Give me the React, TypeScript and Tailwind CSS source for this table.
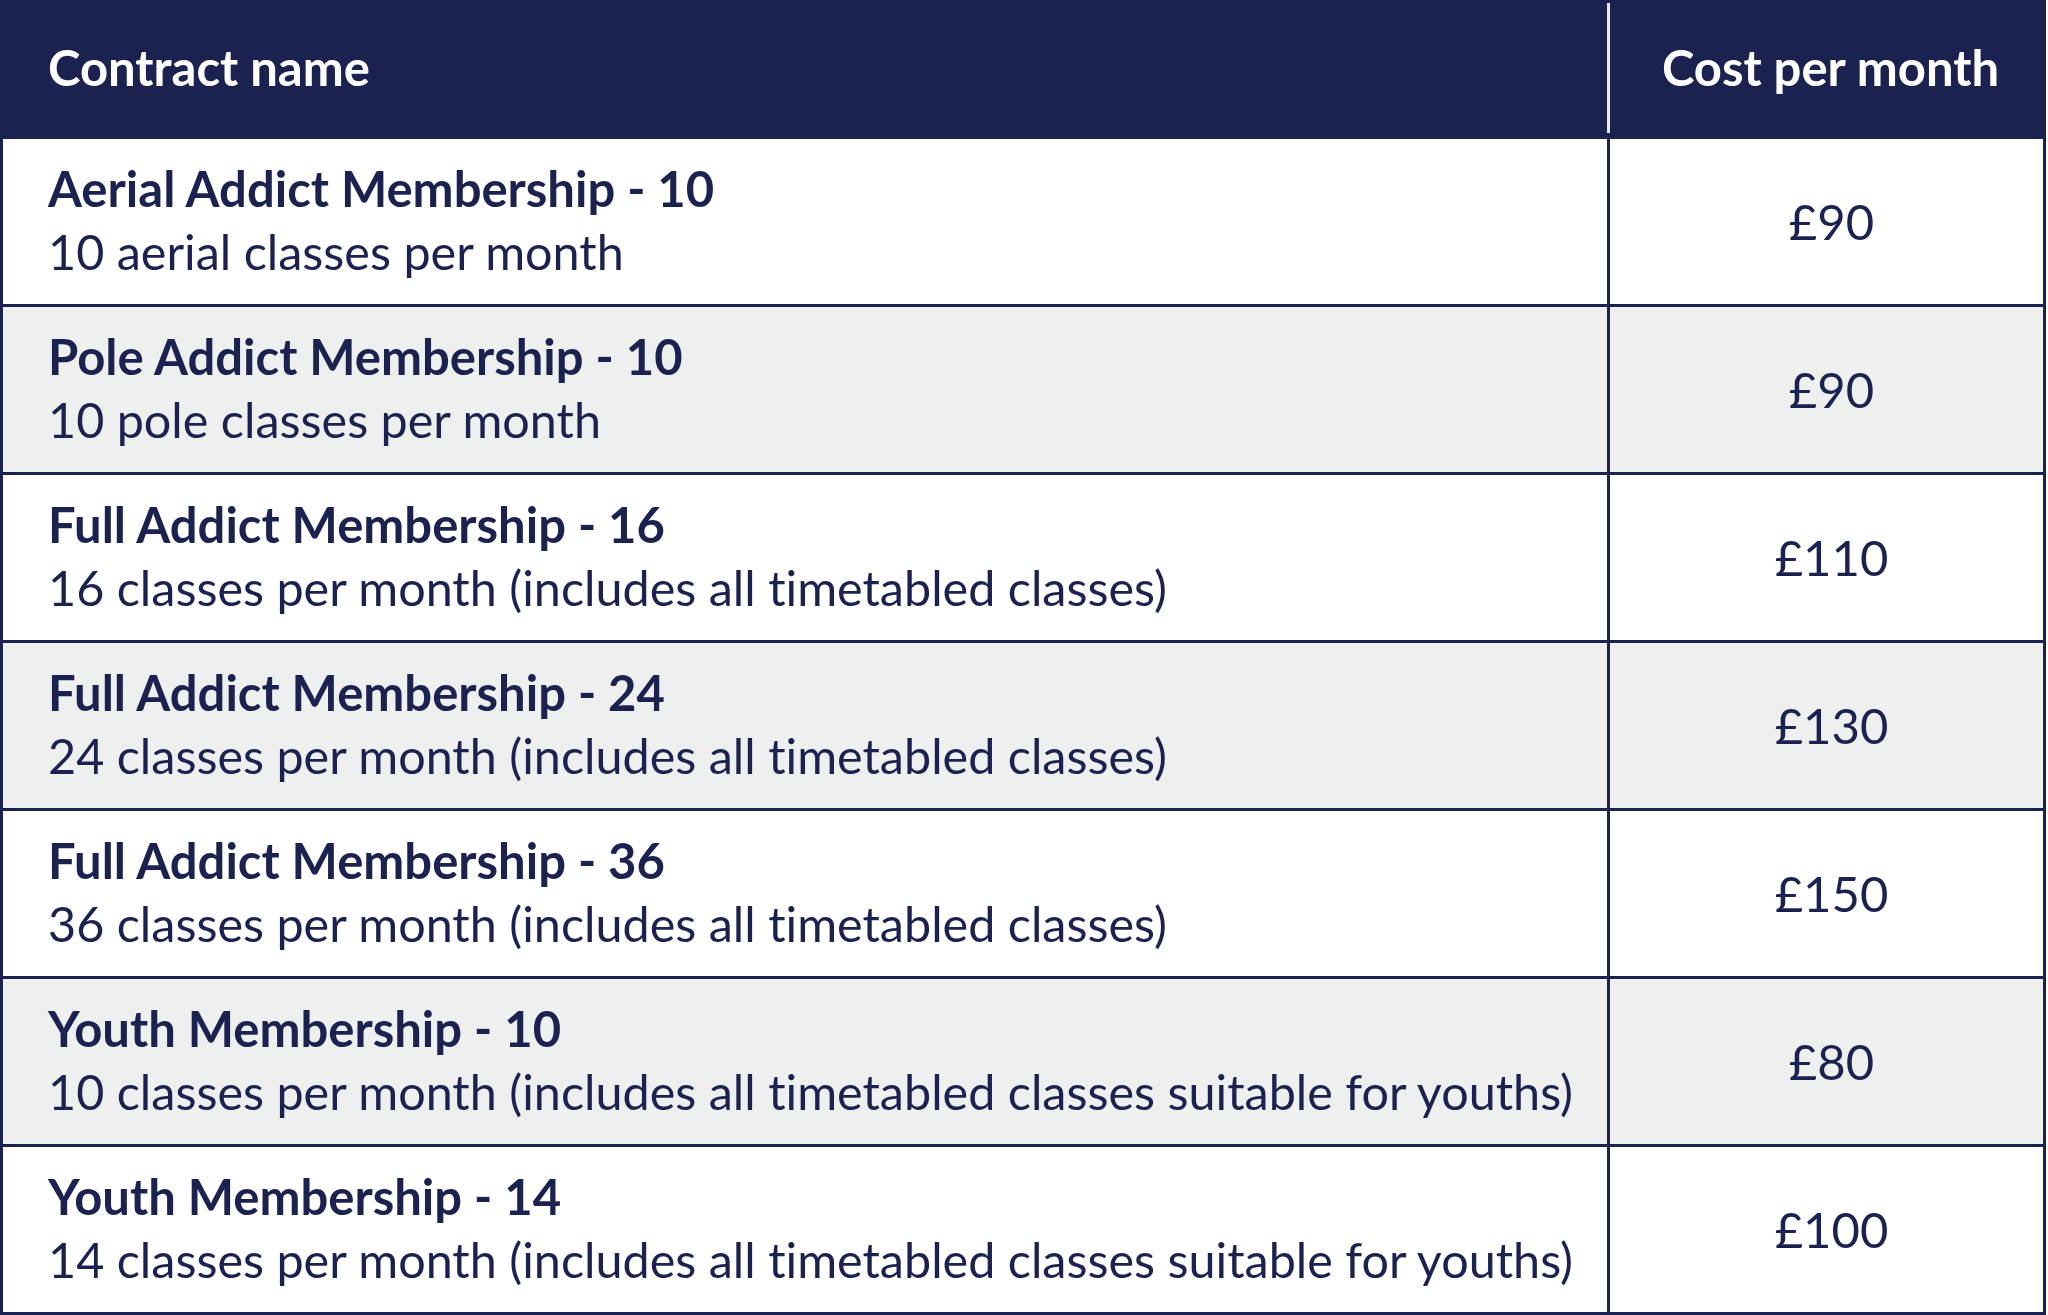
const rows = [
  { name: "Aerial Addict Membership - 10", desc: "10 aerial classes per month", price: "£90" },
  { name: "Pole Addict Membership - 10", desc: "10 pole classes per month", price: "£90" },
  { name: "Full Addict Membership - 16", desc: "16 classes per month (includes all timetabled classes)", price: "£110" },
  { name: "Full Addict Membership - 24", desc: "24 classes per month (includes all timetabled classes)", price: "£130" },
  { name: "Full Addict Membership - 36", desc: "36 classes per month (includes all timetabled classes)", price: "£150" },
  { name: "Youth Membership - 10", desc: "10 classes per month (includes all timetabled classes suitable for youths)", price: "£80" },
  { name: "Youth Membership - 14", desc: "14 classes per month (includes all timetabled classes suitable for youths)", price: "£100" },
];

export default function App() {
  return (
    <div
      className="w-[2048px] h-[1315px] bg-white text-[#1b2250] [font-variant-ligatures:none]"
      style={{ fontFamily: "Lato, 'Open Sans', sans-serif" }}
    >
      <div className="w-[2046px] border-l-[3px] border-r-[3px] border-b-[3px] border-[#1b2250]">
        {/* header */}
        <div className="grid grid-cols-[1604px_1fr] h-[136px] bg-[#1b2250] text-white">
          <div className="flex items-center pl-[45px] text-[49px] font-bold">Contract name</div>
          <div className="flex items-center justify-center pl-[8px] text-[49px] font-bold border-l-[3px] border-[#e8eaf0] my-[3px]">
            Cost per month
          </div>
        </div>

        {rows.map((r, i) => (
          <div
            key={r.name}
            className={
              "grid grid-cols-[1604px_1fr] h-[168px] border-t-[3px] border-[#1b2250] " +
              (i % 2 === 1 ? "bg-[#eeefef]" : "bg-white")
            }
          >
            <div className="flex flex-col justify-center pl-[45px] pb-[3px] leading-[63px]">
              <div className="font-bold text-[49px]">{r.name}</div>
              <div className="text-[48.5px]">{r.desc}</div>
            </div>
            <div className="flex items-center justify-center pl-[10px] border-l-[3px] border-[#1b2250] text-[49px]">
              {r.price}
            </div>
          </div>
        ))}
      </div>
    </div>
  );
}
